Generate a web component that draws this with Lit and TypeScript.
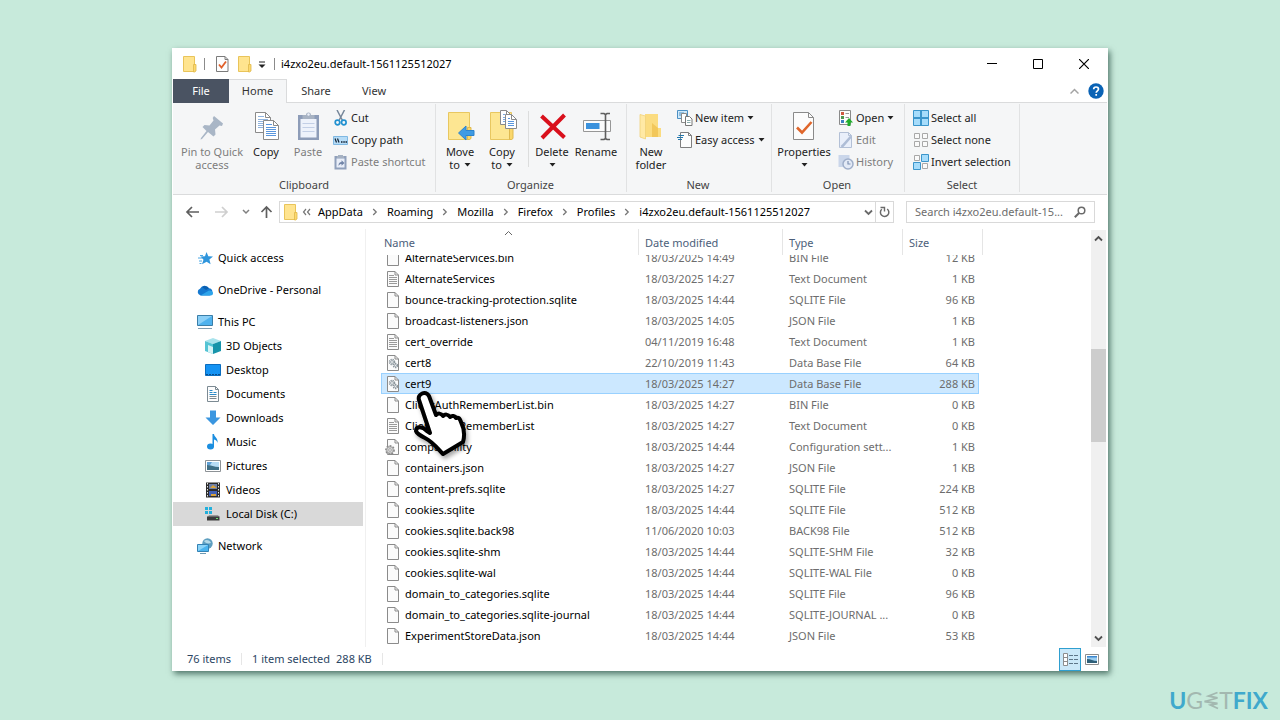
import { LitElement, html, svg, css, nothing } from "lit";
import { customElement } from "lit/decorators.js";
import { classMap } from "lit/directives/class-map.js";

const icon = (w: number, h: number, body: unknown) =>
  html`<svg width=${w} height=${h} viewBox="0 0 ${w} ${h}" fill="none" aria-hidden="true">${body}</svg>`;

const caret = icon(7, 4, svg`<path d="M.5 0h6L3.5 3.6z" fill="#222"/>`);
const chevronRight = icon(6, 8, svg`<path d="M1.2 1l3 3-3 3" stroke="#777" stroke-width="1.3"/>`);

const folderSmall = icon(16, 18, svg`
  <path d="M1.5 1.5h11v15h-11z" fill="#ffe48f" stroke="#e9c45a"/>
  <path d="M11.5 9.5h2.500v6.500l-1.500 1h-1z" fill="#fcd96f" stroke="#e0b84a" stroke-width=".8"/>`);

const checkDoc = icon(14, 16, svg`
  <path d="M1.500.5h8.500l3 3v12H1.500z" fill="#fdfdfd" stroke="#7b7b7b"/>
  <path d="M10 .5v3h3" stroke="#7b7b7b"/>
  <path d="M4 8.500l2.500 3L11 5.500" stroke="#e0602a" stroke-width="1.800"/>`);

const docs = (x: number, y: number, w: number, h: number, color: string) => svg`
  <path d="M${x}.5 ${y}.5h${w - 5}l5 5v${h - 5}h-${w}z" fill="#fff" stroke="#8a8a8a"/>
  <path d="M${x + w - 5}.5 ${y}.5v5h5" stroke="#8a8a8a"/>
  ${[7, 9, 11, 13, 15].filter((v) => v < h - 1).map((v) => svg`<path d="M${x + 3} ${y + v}.5h${w - 5}" stroke=${color}/>`)}
  <path d="M${x + 3} ${y + 4}.5h${w - 9}" stroke=${color}/>`;

const bigFolder = svg`
  <path d="M4.500 2.500h21v27h-21z" fill="#fde692" stroke="#e8c760"/>
  <path d="M23.500 17.500h3.500v11l-1.500 1h-2z" fill="#fad76c" stroke="#dfb94f"/>`;

const big: Record<string, unknown> = {
  pin: icon(32, 32, svg`<path d="M18 6l9 7.500-1 2.500-2.500-.5-4.500 4 .5 5-2 2-5.500-4.500-6 7-1.500.5.500-1.500 5.500-7L6.500 17l2-2 5 .5 4-5-.8-2.500z" fill="#a9b6c6"/>`),
  copy: icon(32, 32, svg`${docs(5, 2, 15, 20, "#8fb3de")}${docs(13, 10, 15, 19, "#5a96dc")}`),
  paste: icon(32, 32, svg`
    <path d="M6 5h21v25H6z" fill="#8d9cb8"/><path d="M8.500 9h16v18.500h-16z" fill="#eef2fb"/>
    <path d="M10.500 13.500h12M10.500 17.500h12M10.500 21.500h12" stroke="#c3cfe6"/>
    <path d="M10.500 5H14a2.500 2.500 0 015 0h3.500v4h-12z" fill="#a8b3c3"/><circle cx="16.500" cy="4.500" r="1.200" fill="#eef2fb"/>`),
  move: icon(32, 32, svg`${bigFolder}<path d="M14.500 23l7.500-7v4.500h8v5h-8V30z" fill="#3f9be3" stroke="#2d83cc"/>`),
  copyTo: icon(32, 32, svg`${bigFolder}${docs(14, 0, 11, 14, "#7ca9de")}${docs(19, 4, 11, 14, "#5a96dc")}`),
  delete: icon(32, 32, svg`<path d="M5.500 6l23 21.500M28.500 5L6 28" stroke="#d9101c" stroke-width="4"/>`),
  rename: icon(32, 32, svg`
    <path d="M3.500 10.500h27v11h-27z" fill="#fcfcfc" stroke="#979797"/><path d="M6 13h13.500v6H6z" fill="#3b92dd"/>
    <path d="M20.500 3.500h3.500l1.500 1 1.500-1H30M20.500 29.500h3.500l1.500-1 1.500 1H30M25.500 4.500v24" stroke="#5f5f5f" stroke-width="1.600"/>`),
  newFolder: icon(32, 32, svg`
    <path d="M10 4h13v14h3v9H10z" fill="#fbdc80"/><path d="M17 13l6 5v9h-6z" fill="#f2c75a"/>
    <path d="M5 4.500l5.500 1.500v23L5 27z" fill="#ffe9a5" stroke="#f0d27a" stroke-width=".8"/>`),
  properties: icon(32, 32, svg`
    <path d="M5.500 2.500h15l5 5v22h-20z" fill="#fcfcfc" stroke="#8a8a8a"/><path d="M20.500 2.500v5h5" stroke="#8a8a8a"/>
    <path d="M9 17.500l5 5 9.500-10.500" stroke="#e0662b" stroke-width="2.600"/>`),
};

const clearSquare = (x: number, y: number) => svg`<path d="M${x}.5 ${y}.5h5v5h-5z" fill="#fafafa" stroke="#a8a8a8"/>`;
const blueSquare = (x: number, y: number) => svg`<path d="M${x}.5 ${y}.5h7v7h-7z" fill="#a6dcfb" stroke="#3b95cb"/>`;

const small: Record<string, unknown> = {
  cut: icon(16, 16, svg`
    <path d="M4 0l5.500 10.500M11.500 0L6 10.500" stroke="#76879a" stroke-width="1.500"/>
    <circle cx="4.500" cy="12.500" r="2.300" stroke="#2291d0" stroke-width="1.700"/><circle cx="10.800" cy="12.500" r="2.300" stroke="#2291d0" stroke-width="1.700"/>`),
  copyPath: icon(16, 16, svg`
    <path d="M.5 4.500h14v8H.5z" fill="#b6dcf7" stroke="#7fb8e2"/><path d="M2 6.500l1.500 4M4.500 6.500l1.500 4" stroke="#123" stroke-width="1.200"/>
    <path d="M8 10h1.500M10.300 10h1.500M12.500 10H14" stroke="#123" stroke-width="1.500"/>`),
  shortcut: icon(16, 16, svg`
    <path d="M1.500 2h12v13.500h-12z" fill="#90a0bb"/><path d="M3.500 4.500h8v9h-8z" fill="#e9eef8"/>
    <path d="M5 2V1h5v1h1v2H4V2z" fill="#a5b1c2"/><path d="M5.500 12c0-3 1-4 3-4V6.200l3 2.800-3 2.800V10c-1.200 0-2 .5-3 2z" fill="#7285a8"/>`),
  newItem: icon(16, 16, svg`
    <path d="M.5.5h10v8H.5z" fill="#cfe9fa" stroke="#4c90c4"/><path d="M2 3h5M2 5h4" stroke="#4c90c4"/>
    <path d="M4.500 3.500h5v9h-5z" fill="#fff" stroke="#8a8a8a"/><path d="M8.500 6.500h4l2.500 2.500v6.500H8.500z" fill="#fff" stroke="#777"/>
    <path d="M10 10.500h3.500M10 12.500h3.500" stroke="#8aa"/>`),
  easy: icon(16, 16, svg`
    <path d="M3.500.5h8l3 3v12h-11z" fill="#fdfdfd" stroke="#7f7f7f"/><path d="M11.500.5v3h3" stroke="#7f7f7f"/>
    <path d="M1.500 3.500H7M0 5.500h6M1 7.500h4" stroke="#2478ad" stroke-width="1.100"/>`),
  open: icon(16, 16, svg`
    <path d="M1.500.5h11v14h-11z" fill="#fdfdfd" stroke="#8a8a8a"/><path d="M3 2h3v3H3z" fill="#cf5940"/><path d="M3 6h3v3H3z" fill="#4d9750"/><path d="M3 10h3v3H3z" fill="#3d7fc0"/>
    <path d="M7.500 3.500H11M7.500 7.500H11" stroke="#999"/><path d="M7 12.500L11 8l4 4.500h-2.500V16h-3v-3.500z" fill="#1fae2c"/>`),
  edit: icon(16, 16, svg`
    <path d="M1.500.5h9l3 3v12h-12z" fill="#e9effa" stroke="#b3c0d6"/><path d="M10.500.5v3h3" stroke="#b3c0d6"/>
    <path d="M13 4.500L5 13.500l-1.500 1.500" stroke="#aebdd6" stroke-width="2.600"/>`),
  history: icon(16, 16, svg`
    <path d="M.5 1h11v12H.5z" fill="#cad6ea"/><circle cx="10" cy="10" r="5" fill="#e3eaf6" stroke="#9fafca" stroke-width="1.500"/>
    <path d="M10 7v3h2.500" stroke="#7f92b3" stroke-width="1.200"/>`),
  all: icon(16, 16, svg`
    <path d="M.5.5h15v15H.5z" fill="#a6dcfb" stroke="#3b95cb"/><path d="M8 0v16M0 8h16" stroke="#3b95cb" stroke-width="2"/>`),
  none: icon(16, 16, svg`${clearSquare(1, 1)}${clearSquare(9, 1)}${clearSquare(1, 9)}${clearSquare(9, 9)}`),
  invert: icon(16, 16, svg`${clearSquare(1, 1)}${blueSquare(8, 0)}${blueSquare(0, 8)}${clearSquare(9, 9)}`),
};

const pc = svg`<path d="M.5 1.500h15v10H.5z" fill="#4fb2ee" stroke="#3b7ea8"/><path d="M1 2h14L1 11z" fill="#8cd0f7"/><path d="M1 14.500h14" stroke="#7f9cb0"/>`;
const picture = svg`
  <path d="M.5 2.500h15v11H.5z" fill="#fff" stroke="#8d9296"/><path d="M2 4h12v8H2z" fill="#b7dcf4"/>
  <path d="M2 7c4 0 7 2 12 2v3H2z" fill="#3f6f86"/><path d="M2 4h5l-2 3H2z" fill="#5e9fd4"/>`;

const side: Record<string, unknown> = {
  quick: icon(16, 16, svg`<path d="M9.500 2l1.800 4.200 4.700.3-3.600 3 1.200 4.800-4-2.500L5 14.300l1.500-4.600L3.500 6.500 8 6.200z" fill="#2f95dc"/><path d="M1 8h4M2 11h3M2.500 13.500h2M3 5.500h3" stroke="#4aa8e6"/>`),
  cloud: icon(16, 16, svg`<path d="M3.500 13.500A3.500 3.500 0 013 6.800a5 5 0 019-.6 3.700 3.700 0 01.5 7.300z" fill="#1579d0"/><path d="M3.500 13.500L12 8.500c3 0 4 1.500 4 2.500a2.500 2.500 0 01-2.500 2.500z" fill="#2ea4ea"/><path d="M5 5a5 5 0 017 1.200L9 8z" fill="#0a5fb0"/>`),
  pc: icon(16, 16, pc),
  cube: icon(16, 16, svg`<path d="M8 0l8 3-8 3-8-3z" fill="#a9e3ec"/><path d="M0 3l8 3v10l-8-3z" fill="#55c4d4"/><path d="M16 3L8 6v10l8-3z" fill="#1794aa"/><path d="M3 7l5 2v7l-5-2z" fill="#d7f4f7"/>`),
  desktop: icon(16, 16, svg`<path d="M.5 2.500h15v11H.5z" fill="#1593f3" stroke="#0b6dbf"/><path d="M1 12.500h14" stroke="#0a4e8c" stroke-dasharray="2 1"/>`),
  documents: icon(16, 16, svg`<path d="M2.500.5h8l3 3v12h-11z" fill="#fdfdfd" stroke="#7c8a93"/><path d="M10.500.5v3h3M4.500 10.500h7M4.500 12.500h7" stroke="#7c8a93"/><path d="M4.500 4.500h3M8.500 6.500h3M4.500 6.500h3M4.500 8.500h7" stroke="#2a8bc9"/>`),
  downloads: icon(16, 16, svg`<path d="M5 .5h6v7h4.500L8 15 .5 7.500H5z" fill="#3a96e0"/>`),
  music: icon(16, 16, svg`<ellipse cx="5.500" cy="12.500" rx="3.500" ry="3" fill="#1b8ee0"/><path d="M7.500 0h1.500c0 3 4.500 4 3.500 9-.3-2-1.500-3-3.500-3.500V13H7.500z" fill="#1b8ee0"/>`),
  pictures: icon(16, 16, picture),
  videos: icon(16, 16, svg`<path d="M1 .5h14v15H1z" fill="#2b2b2b"/><path d="M4 2h8v5H4z" fill="#6d7fa8"/><path d="M4 9h8v5H4z" fill="#4260b5"/><path d="M5 6l3-3 4 3zM6 12h5v2H6z" fill="#d9a23a"/><path d="M2.500 1v14M13.500 1v14" stroke="#e6e6e6" stroke-dasharray="1.500 1.500"/>`),
  disk: icon(16, 16, svg`<path d="M0 1h3v3H0zM4 1h3v3H4zM0 5h3v3H0zM4 5h3v3H4z" fill="#22b0dc"/><path d="M4 9h9l1.500 2H2.500z" fill="#9a9a9a"/><path d="M2 10.500h12.500v4H2z" fill="#3b3b3b"/><path d="M11 12.500h2" stroke="#6ee06e"/>`),
  network: icon(16, 16, svg`<circle cx="10.500" cy="5.500" r="5.200" fill="#5f9fc0"/><path d="M7 3c2-2 6-1 7 2-3 1-6 0-7-2z" fill="#b4d9e8"/><path d="M.5 6.500h11v7H.5z" fill="#4cb4ee" stroke="#3482b4"/><path d="M1 7h10l-10 6z" fill="#8cd4f8"/><path d="M3 15.500h6" stroke="#6d9ab4"/>`),
};

const page = svg`<path d="M2.500.5h7.500l3.500 3.500v11.500h-11z" fill="#fbfbfb" stroke="#8b8b8b"/><path d="M10 .5v3.500h3.500" stroke="#8b8b8b"/>`;
const gear = (x: number, y: number, r: number) => svg`<circle cx=${x} cy=${y} r=${r} stroke="#8c979e" stroke-width="1.500" stroke-dasharray="1.300 .7"/><circle cx=${x} cy=${y} r=${r - 1} fill="#e8ecee" stroke="#8c979e" stroke-width=".7"/>`;
const fileIcons: Record<string, unknown> = {
  blank: icon(16, 16, page),
  text: icon(16, 16, svg`${page}<path d="M4 4.500h5M4 6.500h8M4 8.500h8M4 10.500h8M4 12.500h8" stroke="#9a9a9a"/>`),
  db: icon(16, 16, svg`${page}${gear(7, 7, 2.5)}${gear(10.5, 10.5, 2)}`),
  config: icon(16, 16, svg`${page}<circle cx="5" cy="11" r="4" fill="#ddd" stroke="#8a8a8a" stroke-width="1.800" stroke-dasharray="1.800 1.200"/><circle cx="5" cy="11" r="3.300" fill="#d6d6d6" stroke="#8f8f8f" stroke-width=".7"/><circle cx="5" cy="11" r="1.300" fill="#fff" stroke="#888" stroke-width=".7"/>`),
};

type Place = { label: string; icon: string; level: number; gap?: boolean; current?: boolean };
const places: Place[] = [
  { label: "Quick access", icon: "quick", level: 0 },
  { label: "OneDrive - Personal", icon: "cloud", level: 0, gap: true },
  { label: "This PC", icon: "pc", level: 0, gap: true },
  { label: "3D Objects", icon: "cube", level: 1 },
  { label: "Desktop", icon: "desktop", level: 1 },
  { label: "Documents", icon: "documents", level: 1 },
  { label: "Downloads", icon: "downloads", level: 1 },
  { label: "Music", icon: "music", level: 1 },
  { label: "Pictures", icon: "pictures", level: 1 },
  { label: "Videos", icon: "videos", level: 1 },
  { label: "Local Disk (C:)", icon: "disk", level: 1, current: true },
  { label: "Network", icon: "network", level: 0, gap: true },
];

const files: [string, string, string, string, string][] = [
  ["blank", "AlternateServices.bin", "18/03/2025 14:49", "BIN File", "12 KB"],
  ["text", "AlternateServices", "18/03/2025 14:27", "Text Document", "1 KB"],
  ["blank", "bounce-tracking-protection.sqlite", "18/03/2025 14:44", "SQLITE File", "96 KB"],
  ["blank", "broadcast-listeners.json", "18/03/2025 14:05", "JSON File", "1 KB"],
  ["text", "cert_override", "04/11/2019 16:48", "Text Document", "1 KB"],
  ["db", "cert8", "22/10/2019 11:43", "Data Base File", "64 KB"],
  ["db", "cert9", "18/03/2025 14:27", "Data Base File", "288 KB"],
  ["blank", "ClientAuthRememberList.bin", "18/03/2025 14:27", "BIN File", "0 KB"],
  ["text", "ClientAuthRememberList", "18/03/2025 14:27", "Text Document", "0 KB"],
  ["config", "compatibility", "18/03/2025 14:44", "Configuration sett...", "1 KB"],
  ["blank", "containers.json", "18/03/2025 14:27", "JSON File", "1 KB"],
  ["blank", "content-prefs.sqlite", "18/03/2025 14:27", "SQLITE File", "224 KB"],
  ["blank", "cookies.sqlite", "18/03/2025 14:44", "SQLITE File", "512 KB"],
  ["blank", "cookies.sqlite.back98", "11/06/2020 10:03", "BACK98 File", "512 KB"],
  ["blank", "cookies.sqlite-shm", "18/03/2025 14:44", "SQLITE-SHM File", "32 KB"],
  ["blank", "cookies.sqlite-wal", "18/03/2025 14:44", "SQLITE-WAL File", "0 KB"],
  ["blank", "domain_to_categories.sqlite", "18/03/2025 14:44", "SQLITE File", "96 KB"],
  ["blank", "domain_to_categories.sqlite-journal", "18/03/2025 14:44", "SQLITE-JOURNAL ...", "0 KB"],
  ["blank", "ExperimentStoreData.json", "18/03/2025 14:44", "JSON File", "53 KB"],
];
const selectedFile = "cert9";

const base = css`
  * { box-sizing: border-box; }
  button, input { font: inherit; color: inherit; border: 0; background: none; padding: 0; margin: 0; }
  button { display: flex; align-items: center; justify-content: center; }
  a { color: inherit; text-decoration: none; }
  svg { flex: none; display: block; }
`;

@customElement("explorer-ribbon")
class ExplorerRibbon extends LitElement {
  static styles = [base, css`
    :host { display: flex; height: 92px; background: #f5f6f7; border-bottom: 1px solid #dadbdc; color: #222; }
    .group { display: flex; flex-direction: column; flex: none; margin: 1px 0 2px; border-right: 1px solid #e1e2e3; }
    .clipboard { width: 263px; padding-left: 8px; }
    .organize { width: 191px; padding-left: 3px; }
    .new { width: 145px; padding-left: 2px; }
    .open { width: 133px; padding-left: 2px; }
    .select { width: 115px; padding-left: 4px; }
    .tools { display: flex; height: 74px; }
    .name { margin-left: -4px; text-align: center; line-height: 14px; color: #444; }
    .clipboard .name { margin-left: -8px; }
    .big { flex-direction: column; justify-content: flex-start; width: 42px; padding-top: 6px; line-height: 13px; white-space: nowrap; }
    .big .text { margin-top: 3px; }
    .big .drop { display: flex; align-items: center; justify-content: center; gap: 4px; height: 13px; }
    .w44 { width: 44px; }
    .w60 { width: 60px; }
    .w64 { width: 64px; padding-right: 2px; }
    .off { color: #7d7d7d; }
    .column { display: flex; flex-direction: column; padding: 3px 0 0 4px; }
    .small { gap: 2px; height: 22px; justify-content: flex-start; white-space: nowrap; }
    .small .drop { margin-left: 1px; }
    .line { width: 1px; height: 56px; margin: 7px 1px 0 5px; background: #dcdddd; }
  `];

  private big(name: string, first: string, opts: { second?: string; drop?: boolean; off?: boolean; wide?: string } = {}) {
    return html`<button class=${classMap({ big: true, off: !!opts.off, [opts.wide ?? "w42"]: true })}>
      ${big[name]}<span class="text">${first}</span>
      ${opts.second || opts.drop ? html`<span class="drop">${opts.second ?? nothing}${opts.drop ? caret : nothing}</span>` : nothing}
    </button>`;
  }

  private small(name: string, label: string, drop = false, off = false) {
    return html`<button class=${classMap({ small: true, off })}>${small[name]}<span>${label}</span>${drop ? html`<span class="drop">${caret}</span>` : nothing}</button>`;
  }

  render() {
    return html`
      <div class="group clipboard">
        <div class="tools">
          ${this.big("pin", "Pin to Quick", { second: "access", off: true, wide: "w64" })}
          ${this.big("copy", "Copy")}
          ${this.big("paste", "Paste", { off: true })}
          <div class="column">
            ${this.small("cut", "Cut")}${this.small("copyPath", "Copy path")}${this.small("shortcut", "Paste shortcut", false, true)}
          </div>
        </div>
        <div class="name">Clipboard</div>
      </div>
      <div class="group organize">
        <div class="tools">
          ${this.big("move", "Move", { second: "to", drop: true })}
          ${this.big("copyTo", "Copy", { second: "to", drop: true })}
          <div class="line"></div>
          ${this.big("delete", "Delete", { drop: true, wide: "w44" })}
          ${this.big("rename", "Rename", { wide: "w44" })}
        </div>
        <div class="name">Organize</div>
      </div>
      <div class="group new">
        <div class="tools">
          ${this.big("newFolder", "New", { second: "folder", wide: "w44" })}
          <div class="column">${this.small("newItem", "New item", true)}${this.small("easy", "Easy access", true)}</div>
        </div>
        <div class="name">New</div>
      </div>
      <div class="group open">
        <div class="tools">
          ${this.big("properties", "Properties", { drop: true, wide: "w60" })}
          <div class="column">
            ${this.small("open", "Open", true)}${this.small("edit", "Edit", false, true)}${this.small("history", "History", false, true)}
          </div>
        </div>
        <div class="name">Open</div>
      </div>
      <div class="group select">
        <div class="tools">
          <div class="column">${this.small("all", "Select all")}${this.small("none", "Select none")}${this.small("invert", "Invert selection")}</div>
        </div>
        <div class="name">Select</div>
      </div>`;
  }
}

@customElement("explorer-places")
class ExplorerPlaces extends LitElement {
  static styles = [base, css`
    :host { display: block; width: 193px; flex: none; padding: 17px 2px 0 0; border-right: 1px solid #f0f0f0; overflow: hidden; }
    .place { display: flex; align-items: center; gap: 5px; height: 24px; padding-left: 24px; }
    .child { padding-left: 32px; }
    .gap { margin-top: 8px; }
    .current { background: #d9d9d9; }
  `];
  render() {
    return html`<nav aria-label="Folders">${places.map((p) => html`
      <a href="#" class=${classMap({ place: true, child: p.level === 1, gap: !!p.gap, current: !!p.current })}>${side[p.icon]}<span>${p.label}</span></a>`)}</nav>`;
  }
}

@customElement("explorer-files")
class ExplorerFiles extends LitElement {
  static styles = [base, css`
    :host { display: flex; flex: 1; min-width: 0; min-height: 0; }
    .view { flex: 1; min-width: 0; overflow: hidden; padding: 0 0 8px 15px; }
    table { border-collapse: separate; border-spacing: 0; table-layout: fixed; width: 602px; }
    .c-name { width: 258px; }
    .c-date { width: 144px; }
    .c-type { width: 120px; }
    .c-size { width: 76px; }
    .c-rest { width: 4px; }
    th { position: sticky; top: 0; z-index: 1; height: 26px; padding: 2px 0 0 6px; background: #fff; border-right: 1px solid #e5e5e5; text-align: left; font-weight: 400; color: #4c607a; }
    th:first-child { padding-left: 3px; }
    th.c-size { border-right: 0; }
    th.c-rest { padding: 0; }
    .sort { position: absolute; left: 123px; top: 1px; }
    td { height: 21px; padding: 0 0 0 6px; border: 1px solid transparent; border-width: 1px 0; line-height: 19px; white-space: nowrap; color: #6d6d6d; }
    td:first-child { padding-left: 3px; border-left-width: 1px; color: #000; }
    td:nth-child(4) { padding-right: 3px; border-right-width: 1px; text-align: right; }
    .cell { display: flex; align-items: center; gap: 4px; }
    .selected td { background: #cce8ff; border-color: #99d1ff; }
    .bar { display: flex; flex-direction: column; width: 15px; margin: 1px 1px 0 0; background: #f0f0f0; }
    .bar button { height: 17px; }
    .before { flex: 102; }
    .thumb { flex: 93; background: #cdcdcd; }
    .after { flex: 188; }
  `];

  firstUpdated() {
    const view = this.renderRoot.querySelector<HTMLElement>(".view");
    if (view) view.scrollTop = 8;
  }

  render() {
    return html`
      <div class="view">
        <table>
          <thead><tr>
            <th class="c-name">Name<span class="sort">${icon(9, 6, svg`<path d="M1 5l3.500-3.500L8 5" stroke="#666"/>`)}</span></th>
            <th class="c-date">Date modified</th><th class="c-type">Type</th><th class="c-size">Size</th><th class="c-rest"></th>
          </tr></thead>
          <tbody>${files.map(([kind, name, date, type, size]) => html`
            <tr class=${classMap({ selected: name === selectedFile })}>
              <td><span class="cell">${fileIcons[kind]}<span>${name}</span></span></td><td>${date}</td><td>${type}</td><td>${size}</td>
            </tr>`)}</tbody>
        </table>
      </div>
      <div class="bar">
        <button aria-label="Scroll up">${icon(9, 7, svg`<path d="M1 5.500L4.500 2 8 5.500" stroke="#505050" stroke-width="1.800"/>`)}</button>
        <div class="before"></div><div class="thumb"></div><div class="after"></div>
        <button aria-label="Scroll down">${icon(9, 7, svg`<path d="M1 1.500L4.500 5 8 1.500" stroke="#505050" stroke-width="1.800"/>`)}</button>
      </div>`;
  }
}

@customElement("app-root")
class AppRoot extends LitElement {
  static styles = [base, css`
    :host { position: relative; display: flex; flex-direction: column; height: 100vh; overflow: hidden; background: #c7eadb; font: 11px/14px "Noto Sans", "Open Sans", sans-serif; color: #000; }
    .window { display: flex; flex-direction: column; flex: 1; min-height: 0; margin: 48px 172px 0; padding: 0 1px; background: #fff; box-shadow: 2px 3px 6px rgba(0, 40, 30, .6); }
    .title { display: flex; align-items: center; height: 31px; padding-left: 9px; }
    .title h1 { flex: 1; margin: 0; font: inherit; }
    .mark { width: 1px; height: 12px; background: #8b8b8b; }
    .title .folder { margin-right: 6px; }
    .title .check { margin: 0 8px 0 10px; }
    .title .more { margin: 3px 8px 0 5px; }
    .title .mark.last { margin-right: 6px; }
    .title .control { width: 46px; height: 31px; }
    .tabs { display: flex; height: 24px; color: #333; }
    .tab { width: 58px; border-bottom: 1px solid #dadbdc; }
    .tab.file { width: 56px; background: #4a5362; border-color: #4a5362; color: #fff; }
    .tab.active { padding-bottom: 1px; background: #f5f6f7; border: solid #dadbdc; border-width: 1px 1px 0 0; }
    .tabs .fill { flex: 1; display: flex; align-items: center; justify-content: flex-end; gap: 9px; padding-right: 3px; border-bottom: 1px solid #dadbdc; }
    .address { display: flex; align-items: center; height: 34px; padding: 0 12px 0 12px; }
    .back { width: 15px; margin-right: 14px; }
    .forward { width: 15px; margin-right: 13px; }
    .recent { width: 8px; margin-right: 10px; }
    .up { width: 13px; margin-right: 6px; }
    .path { display: flex; flex: 1; align-items: center; min-width: 0; height: 22px; padding-left: 3px; border: 1px solid #d9d9d9; }
    .path .laquo { margin: 0 7px 0 3px; }
    .path .sep { display: flex; justify-content: center; width: 24px; }
    .path .pick { margin-left: auto; width: 14px; height: 20px; }
    .path .refresh { width: 18px; height: 20px; border-left: 1px solid #d9d9d9; }
    .search { display: flex; align-items: center; width: 189px; height: 22px; margin-left: 12px; padding: 0 8px; border: 1px solid #d9d9d9; color: #6d6d6d; }
    .search input { flex: 1; min-width: 0; outline: 0; }
    .search input::placeholder { color: #6d6d6d; opacity: 1; }
    .body { display: flex; flex: 1; min-height: 0; }
    .status { display: flex; align-items: center; height: 24px; padding: 0 8px 0 14px; color: #2b4563; }
    .status .line { width: 1px; height: 12px; margin: 0 10px; background: #e6e6e6; }
    .status .size { margin-left: 6px; }
    .status .modes { display: flex; align-items: center; gap: 4px; margin-left: auto; }
    .status .details { width: 22px; height: 23px; border: 1px solid #2f9fd0; background: #cbe8f8; }
    .brand { display: flex; align-items: center; justify-content: flex-end; height: 49px; padding: 9px 12px 0 0; font: 400 23px/30px Lato, sans-serif; color: #3fa9cc; }
    .brand .mid { display: flex; align-items: center; color: #a3b8b0; }
    .brand b { font-weight: 700; }
    .hand { position: absolute; left: 405px; top: 385px; pointer-events: none; filter: drop-shadow(2px 3px 2px rgba(0, 0, 0, .35)); }
  `];

  render() {
    const arrow = (d: string, color: string) => icon(15, 14, svg`<path d=${d} stroke=${color} stroke-width="1.700"/>`);
    const crumbs = ["AppData", "Roaming", "Mozilla", "Firefox", "Profiles", "i4zxo2eu.default-1561125512027"];
    return html`
      <div class="window">
        <header class="title">
          <span class="folder">${folderSmall}</span><span class="mark"></span>
          <button class="check" aria-label="Properties">${checkDoc}</button>
          <button aria-label="New folder">${folderSmall}</button>
          <button class="more" aria-label="Customize">${icon(8, 8, svg`<path d="M1 1h6" stroke="#222"/><path d="M.5 3.500h7L4 7z" fill="#222"/>`)}</button>
          <span class="mark last"></span>
          <h1>i4zxo2eu.default-1561125512027</h1>
          <button class="control" aria-label="Minimize">${icon(10, 10, svg`<path d="M0 4.500h10" stroke="#000"/>`)}</button>
          <button class="control" aria-label="Maximize">${icon(10, 10, svg`<path d="M.5.5h9v9h-9z" stroke="#000"/>`)}</button>
          <button class="control" aria-label="Close">${icon(10, 10, svg`<path d="M0 0l10 10M10 0L0 10" stroke="#000" stroke-width="1.200"/>`)}</button>
        </header>
        <div class="tabs">
          <button class="tab file">File</button><button class="tab active">Home</button>
          <button class="tab">Share</button><button class="tab">View</button>
          <div class="fill">
            <button aria-label="Collapse ribbon">${icon(9, 6, svg`<path d="M.5 5.500l4-4 4 4" stroke="#a3a3a3" stroke-width="1.500"/>`)}</button>
            <button aria-label="Help">${icon(16, 16, svg`<circle cx="8" cy="8" r="7.700" fill="#0a63b5"/><path d="M5.700 6.300c0-3 4.800-3 4.800-.2 0 1.700-2.300 1.800-2.300 3.700M8.200 11v1.800" stroke="#fff" stroke-width="1.700"/>`)}</button>
          </div>
        </div>
        <explorer-ribbon></explorer-ribbon>
        <div class="address">
          <button class="back" aria-label="Back">${arrow("M2 7h12M7 2L2 7l5 5", "#5f5f5f")}</button>
          <button class="forward" aria-label="Forward">${arrow("M1 7h12M8 2l5 5-5 5", "#cfcfcf")}</button>
          <button class="recent" aria-label="Recent locations">${icon(8, 6, svg`<path d="M1 1l3 3 3-3" stroke="#808080" stroke-width="1.500"/>`)}</button>
          <button class="up" aria-label="Up">${icon(13, 14, svg`<path d="M6.500 13V2.500M1.500 7l5-5 5 5" stroke="#5f5f5f" stroke-width="1.700"/>`)}</button>
          <div class="path">
            ${folderSmall}
            <span class="laquo">${icon(9, 8, svg`<path d="M4 1L1.500 4 4 7M8 1L5.500 4 8 7" stroke="#777" stroke-width="1.200"/>`)}</span>
            ${crumbs.map((c, i) => html`${i ? html`<span class="sep">${chevronRight}</span>` : nothing}<a href="#">${c}</a>`)}
            <button class="pick" aria-label="Previous locations">${icon(9, 7, svg`<path d="M1 1.500L4.500 5 8 1.500" stroke="#6a6a6a" stroke-width="1.800"/>`)}</button>
            <button class="refresh" aria-label="Refresh">${icon(11, 12, svg`<path d="M8.200 3A4.200 4.200 0 112.800 3.200" stroke="#6a6a6a" stroke-width="1.500"/><path d="M1.500 1.500H5.500V5.500" stroke="#6a6a6a" stroke-width="1.400"/>`)}</button>
          </div>
          <label class="search">
            <input type="text" aria-label="Search" placeholder="Search i4zxo2eu.default-15..." />
            ${icon(12, 12, svg`<circle cx="7.500" cy="4.500" r="3.300" stroke="#6a6a6a" stroke-width="1.500"/><path d="M5 7L.8 11.200" stroke="#6a6a6a" stroke-width="2"/>`)}
          </label>
        </div>
        <div class="body">
          <explorer-places></explorer-places>
          <explorer-files></explorer-files>
        </div>
        <footer class="status">
          <span>76 items</span><span class="line"></span><span>1 item selected</span><span class="size">288 KB</span><span class="line"></span>
          <div class="modes">
            <button class="details" aria-label="Details view">${icon(17, 13, svg`<path d="M1.500.5h4v12h-4z" fill="#fff" stroke="#8d8d8d"/><path d="M1.500 4.500h4M1.500 8.500h4" stroke="#8d8d8d"/><path d="M7 2.500h4M12 2.500h4M7 6.500h4M12 6.500h4M7 10.500h4M12 10.500h4" stroke="#5e7688"/>`)}</button>
            <button aria-label="Large icons view">${icon(14, 11, svg`<path d="M.5.5h13v10H.5z" fill="#fff" stroke="#8d8d8d"/><path d="M2 2h10v7H2z" fill="#9bcdf0"/><path d="M2 5c4 0 6 2 10 2v2H2z" fill="#2f5f78"/><path d="M2 2h10v1.500H2z" fill="#3d87cf"/>`)}</button>
          </div>
        </footer>
      </div>
      <div class="brand"><b>U</b><span class="mid">G${icon(16, 20, svg`<path d="M14.500 2.500L5.500 6l9 2L1.500 11.500l13 2-7 1.500 7.500 3.500" stroke="#a3b8b0" stroke-width="1.800"/>`)}T</span><b>FIX</b></div>
      <svg class="hand" width="70" height="80" viewBox="0 0 70 80" fill="none" aria-hidden="true">
        <path d="M14 15C12 9 21 5 24 11l7 19c2-2 5-2 7 1 2-2 5-2 7 1 2-2 5-1 6 1 3-1 4 1 5 4 3 6 4 13 2 20L38 69C33 64 28 57 20 53c-4-2-8-4-9-7 0-5 6-5 11 0l3 2z" fill="#fff" stroke="#000" stroke-width="4" stroke-linejoin="round"/>
      </svg>`;
  }
}
